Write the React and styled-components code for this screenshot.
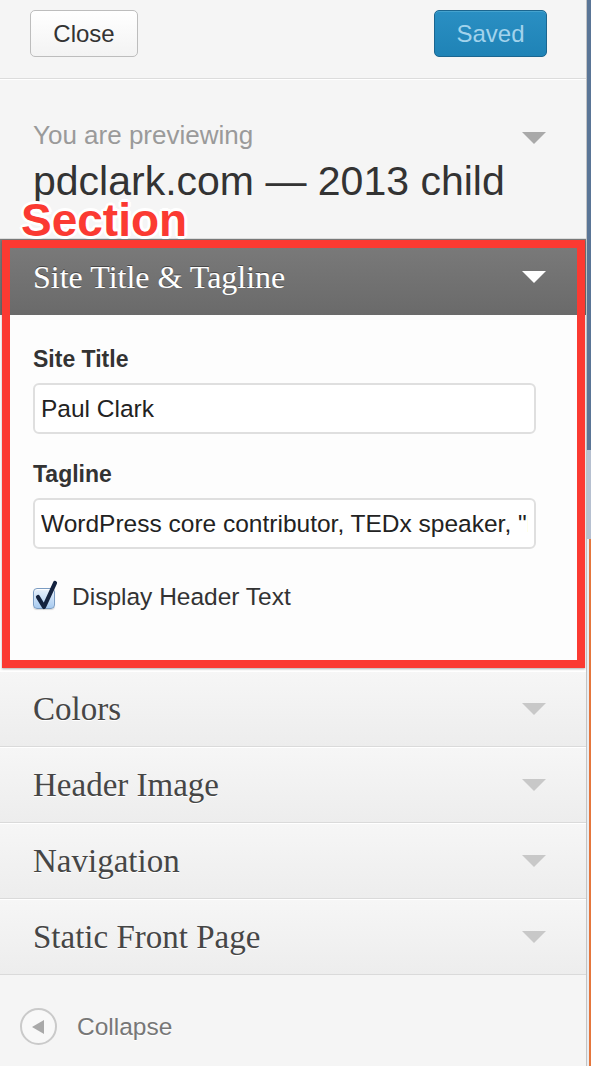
import React from "react";
import styled, { createGlobalStyle } from "styled-components";

const GlobalStyle = createGlobalStyle`
  html, body { margin: 0; padding: 0; }
  body {
    width: 591px;
    height: 1066px;
    overflow: hidden;
    background: #f5f5f5;
    font-family: "Liberation Sans", Arial, sans-serif;
  }
  * { box-sizing: border-box; }
`;

const SERIF = `"Liberation Serif", "Times New Roman", serif`;
const RED = "#fb3a32";

const Screen = styled.div`
  display: flex;
  width: 591px;
  height: 1066px;
`;

const Sidebar = styled.aside`
  width: 587px;
  flex: none;
  display: flex;
  flex-direction: column;
  background: #f5f5f5;
  border-right: 1px solid #c4c4c4;
`;

const Preview = styled.div`
  flex: 1;
  display: flex;
  flex-direction: column;
`;

const PreviewBand = styled.div`
  height: ${(p) => p.$h || "auto"};
  flex: ${(p) => (p.$h ? "none" : "1")};
  background: ${(p) => p.$bg};
  box-shadow: ${(p) => (p.$edge ? `inset -2px 0 0 ${p.$edge}` : "none")};
`;

const TopBar = styled.div`
  height: 79px;
  display: flex;
  align-items: flex-start;
  justify-content: space-between;
  padding: 10px 39px 0 30px;
  border-bottom: 1px solid #dcdcdc;
`;

const Button = styled.button`
  width: ${(p) => p.$w}px;
  height: 47px;
  border-radius: 5px;
  font-family: "Liberation Sans", Arial, sans-serif;
  font-size: 24px;
  padding: 0;
  cursor: pointer;
  border: 1px solid ${(p) => (p.$primary ? "#1b6690" : "#bdbdbd")};
  color: ${(p) => (p.$primary ? "#a2d3ec" : "#333")};
  background: ${(p) =>
    p.$primary
      ? "linear-gradient(#2a8fc3, #1f83b6)"
      : "linear-gradient(#ffffff, #f3f3f3)"};
  box-shadow: ${(p) =>
    p.$primary ? "inset 0 1px 0 rgba(120,200,230,.35)" : "inset 0 1px 0 #fff"};
`;

const ThemeInfo = styled.div`
  border-top: 1px solid #fff;
  border-bottom: 1px solid #dcdcdc;
  padding: 40px 40px 34px 33px;
`;

const CaptionRow = styled.div`
  display: flex;
  justify-content: space-between;
  align-items: center;
`;

const Caption = styled.span`
  font-size: 26px;
  line-height: 30px;
  color: #9a9a9a;
`;

const ThemeName = styled.div`
  margin-top: 8px;
  font-size: 41px;
  line-height: 46px;
  color: #333;
  white-space: nowrap;
`;

const Arrow = styled.span`
  width: 0;
  height: 0;
  flex: none;
  border-left: 12px solid transparent;
  border-right: 12px solid transparent;
  border-top: 12px solid ${(p) => p.$color};
  margin-top: ${(p) => p.$offset || 0}px;
`;

const Section = styled.section`
  position: relative;
`;

const SectionHeader = styled.h3`
  margin: 0;
  height: 76px;
  display: flex;
  align-items: center;
  justify-content: space-between;
  padding: 0 40px 0 33px;
  background: linear-gradient(#7b7b7b, #6a6a6a);
  font-family: ${SERIF};
  font-weight: normal;
  font-size: 32px;
  color: #fff;
  text-shadow: 0 -1px 0 #4a4a4a;
`;

const SectionBody = styled.div`
  height: 356px;
  padding: 31px 50px 0 33px;
  background: #fdfdfd;
  display: flex;
  flex-direction: column;
`;

const Field = styled.label`
  display: block;
  margin-bottom: 27px;
`;

const FieldLabel = styled.span`
  display: block;
  font-size: 23px;
  line-height: 26px;
  font-weight: bold;
  color: #333;
  margin-bottom: 11px;
`;

const TextInput = styled.input`
  display: block;
  width: 100%;
  height: 51px;
  border: 2px solid #dfdfdf;
  border-radius: 6px;
  padding: 0 6px;
  background: #fff;
  font-family: "Liberation Sans", Arial, sans-serif;
  font-size: 24.5px;
  color: #222;
  outline: none;
`;

const CheckRow = styled.label`
  display: flex;
  align-items: center;
  gap: 17px;
  margin-top: 8px;
  font-size: 24.5px;
  line-height: 26px;
  color: #333;
`;

const CheckBox = styled.span`
  position: relative;
  width: 22px;
  height: 21px;
  margin-top: 3px;
  flex: none;
  border: 1px solid #7b9cc2;
  border-radius: 4px;
  background: linear-gradient(#e6f0fb, #a8cbf0);
  box-shadow: inset 0 1px 1px #fff, 0 1px 1px rgba(0, 0, 0, 0.15);
`;

const CheckMark = styled.svg`
  position: absolute;
  left: 1px;
  top: -9px;
  overflow: visible;
`;

const Highlight = styled.div`
  position: absolute;
  top: 1px;
  left: 2px;
  width: 583px;
  height: 428px;
  border: 8px solid ${RED};
  box-shadow: 0 1px 2px rgba(0, 0, 0, 0.3);
  pointer-events: none;
`;

const Tag = styled.span`
  position: absolute;
  left: 21px;
  top: -42px;
  font-family: "Liberation Sans", Arial, sans-serif;
  font-weight: bold;
  font-size: 46px;
  line-height: 1;
  color: ${RED};
  text-shadow: 3px 0 0 #fff, -3px 0 0 #fff, 0 3px 0 #fff, 0 -3px 0 #fff,
    2px 2px 0 #fff, -2px -2px 0 #fff, 2px -2px 0 #fff, -2px 2px 0 #fff;
`;

const Row = styled.h3`
  margin: 0;
  height: 76px;
  display: flex;
  align-items: center;
  justify-content: space-between;
  padding: 0 40px 0 33px;
  border-top: 1px solid #fff;
  border-bottom: 1px solid #dadada;
  background: linear-gradient(#f6f6f6, #ededed);
  font-family: ${SERIF};
  font-weight: normal;
  font-size: 33px;
  color: #464646;
  text-shadow: 0 1px 0 #fff;
`;

const CollapseBar = styled.div`
  display: flex;
  align-items: center;
  gap: 20px;
  padding: 33px 0 0 20px;
  font-size: 24.5px;
  color: #777;
  text-shadow: 0 1px 0 #fff;
`;

const CollapseCircle = styled.span`
  width: 37px;
  height: 37px;
  flex: none;
  border: 2px solid #cacaca;
  border-radius: 50%;
  background: #f8f8f8;
  display: flex;
  align-items: center;
  justify-content: center;
  &::before {
    content: "";
    margin-left: -2px;
    border-top: 7px solid transparent;
    border-bottom: 7px solid transparent;
    border-right: 12px solid #a9a9a9;
  }
`;

const rows = ["Colors", "Header Image", "Navigation", "Static Front Page"];

export default function App() {
  return (
    <>
      <GlobalStyle />
      <Screen>
        <Sidebar>
          <TopBar>
            <Button $w={108}>Close</Button>
            <Button $w={113} $primary>
              Saved
            </Button>
          </TopBar>
          <ThemeInfo>
            <CaptionRow>
              <Caption>You are previewing</Caption>
              <Arrow $color="#a9a9a9" $offset={5} />
            </CaptionRow>
            <ThemeName>pdclark.com — 2013 child</ThemeName>
          </ThemeInfo>
          <Section>
            <SectionHeader>
              Site Title &amp; Tagline
              <Arrow $color="#fff" />
            </SectionHeader>
            <SectionBody>
              <Field>
                <FieldLabel>Site Title</FieldLabel>
                <TextInput readOnly value="Paul Clark" />
              </Field>
              <Field>
                <FieldLabel>Tagline</FieldLabel>
                <TextInput
                  readOnly
                  value={'WordPress core contributor, TEDx speaker, "lifelong learner"'}
                />
              </Field>
              <CheckRow>
                <CheckBox>
                  <CheckMark width="24" height="30" viewBox="0 0 24 30">
                    <path
                      d="M3 17 L9 27 L20 3"
                      fill="none"
                      stroke="#14233f"
                      strokeWidth="4.2"
                      strokeLinecap="round"
                      strokeLinejoin="round"
                    />
                  </CheckMark>
                </CheckBox>
                Display Header Text
              </CheckRow>
            </SectionBody>
            <Highlight />
            <Tag>Section</Tag>
          </Section>
          {rows.map((r) => (
            <Row key={r}>
              {r}
              <Arrow $color="#c8c8c8" />
            </Row>
          ))}
          <CollapseBar>
            <CollapseCircle />
            Collapse
          </CollapseBar>
        </Sidebar>
        <Preview>
          <PreviewBand $h="450px" $bg="#5a7596" />
          <PreviewBand $h="89px" $bg="#b6c0d0" />
          <PreviewBand $bg="#e9edf2" $edge="#e5763c" />
        </Preview>
      </Screen>
    </>
  );
}
